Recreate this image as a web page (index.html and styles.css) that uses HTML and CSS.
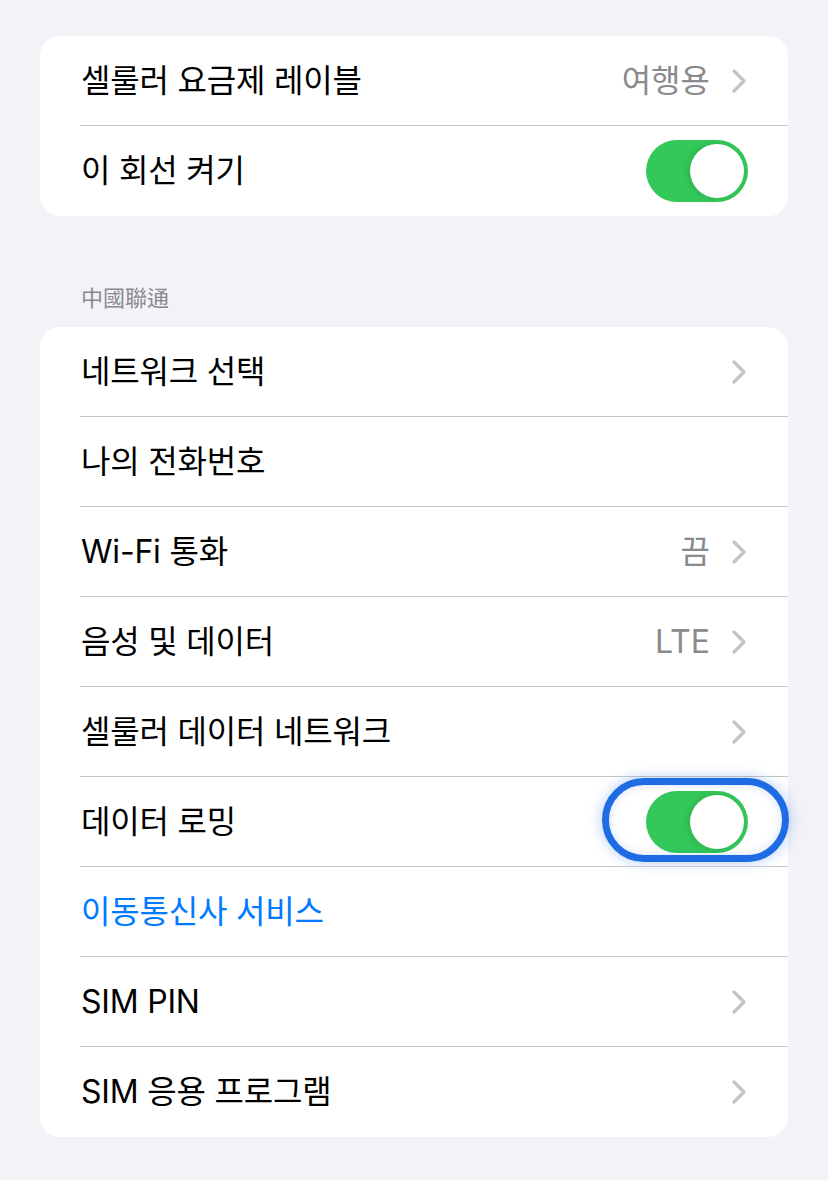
FILE: index.html
```html
<!DOCTYPE html>
<html lang="ko">
<head>
<meta charset="utf-8">
<link rel="stylesheet" href="styles.css">
</head>
<body>
<div class="page">
  <div class="card">
    <div class="row">
      <span class="label">셀룰러 요금제 레이블</span>
      <span class="value">여행용</span>
      <svg class="chev" viewBox="0 0 14 24"><polyline points="2,2 12,12 2,22"/></svg>
    </div>
    <div class="row">
      <span class="label">이 회선 켜기</span>
      <span class="toggle"><span class="knob"></span></span>
    </div>
  </div>

  <div class="header">中國聯通</div>

  <div class="card">
    <div class="row">
      <span class="label">네트워크 선택</span>
      <svg class="chev" viewBox="0 0 14 24"><polyline points="2,2 12,12 2,22"/></svg>
    </div>
    <div class="row">
      <span class="label">나의 전화번호</span>
    </div>
    <div class="row">
      <span class="label">Wi-Fi 통화</span>
      <span class="value">끔</span>
      <svg class="chev" viewBox="0 0 14 24"><polyline points="2,2 12,12 2,22"/></svg>
    </div>
    <div class="row">
      <span class="label">음성 및 데이터</span>
      <span class="value">LTE</span>
      <svg class="chev" viewBox="0 0 14 24"><polyline points="2,2 12,12 2,22"/></svg>
    </div>
    <div class="row">
      <span class="label">셀룰러 데이터 네트워크</span>
      <svg class="chev" viewBox="0 0 14 24"><polyline points="2,2 12,12 2,22"/></svg>
    </div>
    <div class="row">
      <span class="label">데이터 로밍</span>
      <span class="toggle focused"><span class="knob"></span></span>
    </div>
    <div class="row">
      <span class="label link">이동통신사 서비스</span>
    </div>
    <div class="row">
      <span class="label">SIM PIN</span>
      <svg class="chev" viewBox="0 0 14 24"><polyline points="2,2 12,12 2,22"/></svg>
    </div>
    <div class="row">
      <span class="label">SIM 응용 프로그램</span>
      <svg class="chev" viewBox="0 0 14 24"><polyline points="2,2 12,12 2,22"/></svg>
    </div>
  </div>
</div>
</body>
</html>
```
FILE: styles.css
```css
html, body {
  margin: 0;
  padding: 0;
  background: #f2f2f7;
}
body {
  font-family: "Inter", "Noto Sans CJK KR", sans-serif;
  color: #000;
}
.page {
  padding: 36px 40px 0 40px;
}
.card {
  background: #fff;
  border-radius: 20px;
}
.row {
  position: relative;
  height: 90px;
  display: flex;
  align-items: center;
  padding: 0 40px 0 41px;
  box-sizing: border-box;
}
.row + .row::before {
  content: "";
  position: absolute;
  top: -1px;
  left: 40px;
  right: 0;
  height: 1px;
  background: #c6c6c8;
}
.label {
  flex: 1;
  font-size: 32px;
  letter-spacing: -0.2px;
  line-height: 40px;
}
.link {
  color: #007aff;
}
.value {
  font-size: 32px;
  color: #8a8a8e;
  line-height: 40px;
  margin-right: 22px;
}
.chev {
  width: 14px;
  height: 24px;
  margin-right: 2px;
}
.chev polyline {
  fill: none;
  stroke: #c4c4c7;
  stroke-width: 3.2;
  stroke-linecap: round;
  stroke-linejoin: round;
}
.toggle {
  position: relative;
  width: 102px;
  height: 62px;
  border-radius: 31px;
  background: #34c759;
  display: flex;
  align-items: center;
  justify-content: flex-end;
  padding: 4px;
  box-sizing: border-box;
}
.knob {
  width: 54px;
  height: 54px;
  border-radius: 50%;
  background: #fff;
  box-shadow: -2px 0 6px rgba(0, 0, 0, 0.12);
}
.focused::after {
  content: "";
  position: absolute;
  left: -44px;
  right: -41px;
  top: -13px;
  bottom: -9px;
  border: 7px solid #1e6be3;
  border-radius: 42px;
  box-shadow: 0 0 14px rgba(30, 107, 227, 0.35), inset 0 0 10px rgba(30, 107, 227, 0.2);
}
.header {
  margin: 65px 0 16px 41px;
  font-size: 22px;
  line-height: 30px;
  color: #8a8a8e;
  font-family: "Noto Sans CJK TC", sans-serif;
}
```
